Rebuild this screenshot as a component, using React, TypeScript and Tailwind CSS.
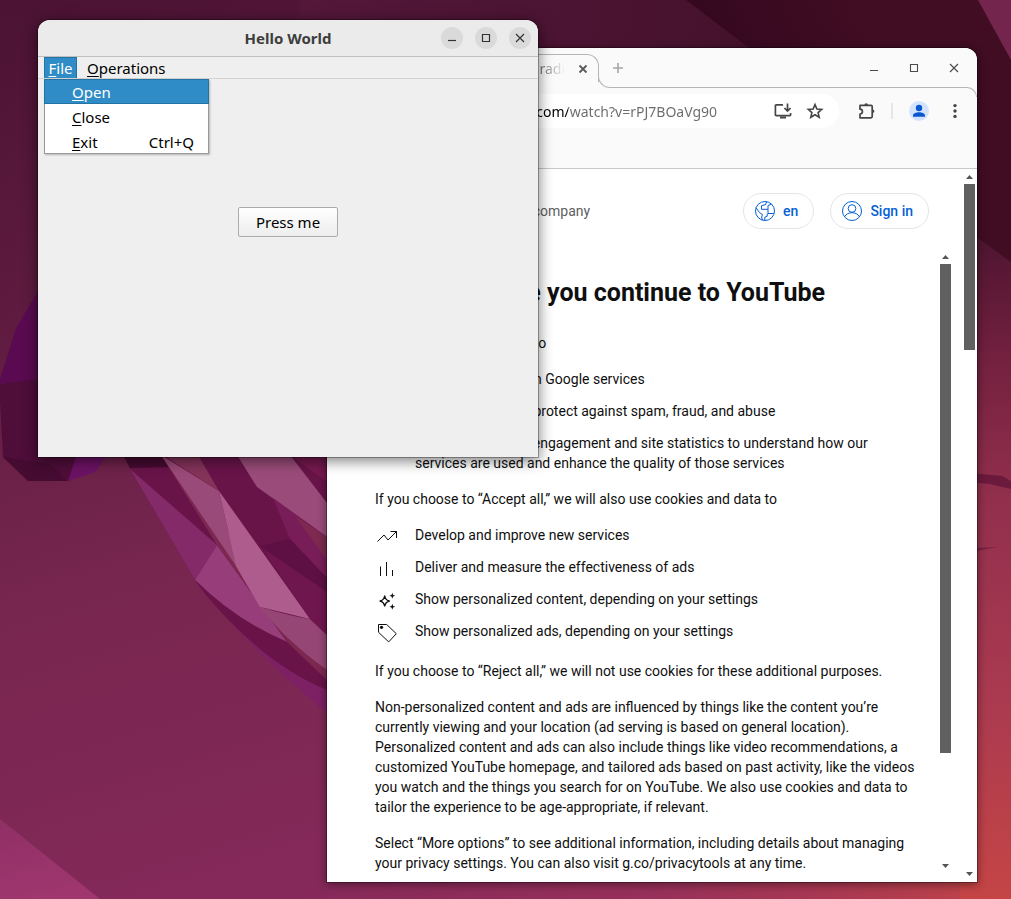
import { useState } from "react";
import type { ReactNode } from "react";

const UI = "font-['Noto_Sans','Open_Sans',sans-serif]";

function Wallpaper() {
  return (
    <svg aria-hidden="true" className="absolute inset-0 h-full w-full" viewBox="0 0 1011 899" preserveAspectRatio="none">
      <defs>
        <linearGradient id="base" gradientUnits="userSpaceOnUse" x1="60" y1="0" x2="330" y2="899">
          <stop offset="0" stopColor="#4c1334" />
          <stop offset="0.3" stopColor="#5e1b3f" />
          <stop offset="0.6" stopColor="#76264f" />
          <stop offset="1" stopColor="#86295a" />
        </linearGradient>
        <linearGradient id="top" gradientUnits="userSpaceOnUse" x1="300" y1="0" x2="740" y2="0">
          <stop offset="0" stopColor="#54173a" />
          <stop offset="1" stopColor="#45122d" />
        </linearGradient>
        <linearGradient id="east" gradientUnits="userSpaceOnUse" x1="960" y1="230" x2="1000" y2="899">
          <stop offset="0" stopColor="#4b1430" />
          <stop offset="0.2" stopColor="#74213f" />
          <stop offset="0.4" stopColor="#912f4d" />
          <stop offset="0.7" stopColor="#aa3a50" />
          <stop offset="1" stopColor="#c54545" />
        </linearGradient>
        <linearGradient id="south" gradientUnits="userSpaceOnUse" x1="300" y1="0" x2="1011" y2="0">
          <stop offset="0" stopColor="#86295a" />
          <stop offset="0.5" stopColor="#97305a" />
          <stop offset="0.8" stopColor="#ad3a50" />
          <stop offset="1" stopColor="#c44546" />
        </linearGradient>
        <linearGradient id="dark" gradientUnits="userSpaceOnUse" x1="720" y1="60" x2="850" y2="0">
          <stop offset="0" stopColor="#350820" />
          <stop offset="1" stopColor="#400d22" />
        </linearGradient>
        <linearGradient id="corner" x1="0" y1="0" x2="0.3" y2="1">
          <stop offset="0" stopColor="#8f3065" />
          <stop offset="1" stopColor="#9f366e" />
        </linearGradient>
      </defs>
      <rect width="1011" height="899" fill="url(#base)" />
      <rect x="300" width="711" height="60" fill="url(#top)" />
      <rect x="327" y="860" width="684" height="39" fill="url(#south)" />
      <path d="M686 0H1011V270L960 225V60H765Z" fill="url(#dark)" />
      <path d="M978 0H1011V60Z" fill="#74254e" />
      <path d="M960 225L1011 262V899H960Z" fill="url(#east)" />
      <path d="M960 472L1002 476L1011 481V489L990 484L960 481Z" fill="#6b1a3d" />
      <path d="M960 549L997 547L970 552H960Z" fill="#74203f" />
      <path d="M38 291L16 328L0 379V384L50 378V291Z" fill="#5a0a50" />
      <path d="M0 384L60 376L120 457L105 457L68 481H28L3 457L0 400Z" fill="#4f0d3a" />
      <path d="M3 457L28 481H68L50 464Z" fill="#450b31" />
      <path d="M76 457H106L95 472L68 481Z" fill="#6b1264" />
      <path d="M123 455H327V675L285 641Q220 590 195 580L130 469Z" fill="#681449" />
      <path d="M123 455H163L172 467L130 468Z" fill="#450b31" />
      <path d="M130 469L217 545L195 580Z" fill="#842a69" />
      <path d="M217 545L287 642Q235 620 195 580Z" fill="#973d7a" />
      <path d="M195 580Q235 620 287 642L327 690V713Q250 650 195 580Z" fill="#7d2164" />
      <path d="M195 580Q235 620 287 642L327 680V690Q265 665 205 594Z" fill="#681449" />
      <path d="M161 455L217 545L287 642L327 680V660L262 607L210 495Z" fill="#7c2851" />
      <path d="M161 455L219 491L228 530L260 607L236 566Z" fill="#9a4a78" />
      <path d="M219 491L310 619L260 607L236 566L228 530Z" fill="#ad5c8d" />
      <path d="M260 607Q290 616 310 619L327 635V670Q285 640 260 607Z" fill="#964674" />
      <path d="M163 455H198L219 491Z" fill="#843359" />
      <path d="M237 455H290L327 503V537L257 487Z" fill="#9a4b79" />
      <path d="M290 455H327V482Z" fill="#77194f" />
      <path d="M273 498L327 537V578L290 539Z" fill="#781d58" />
      <path d="M295 516L327 537V560Z" fill="#7d2950" />
      <path d="M260 546L290 539L327 578V592Z" fill="#5e1044" />
      <path d="M263 549L327 592V635L310 619Z" fill="#70164f" />
      <path d="M0 819L100 899H0Z" fill="url(#corner)" />
    </svg>
  );
}

function RoundButton({ label, children }: { label: string; children: ReactNode }) {
  return (
    <button aria-label={label} className="flex size-[22px] items-center justify-center rounded-full bg-[#dadada] text-[#333]">
      <svg aria-hidden="true" className="size-4" viewBox="0 0 16 16" fill="none" stroke="currentColor" strokeWidth="1.2">
        {children}
      </svg>
    </button>
  );
}

function FlatButton({ label, children }: { label: string; children: ReactNode }) {
  return (
    <button aria-label={label} className="flex size-6 items-center justify-center text-[#4a4a4a]">
      <svg aria-hidden="true" className="size-4" viewBox="0 0 16 16" fill="none" stroke="currentColor" strokeWidth="1.1">
        {children}
      </svg>
    </button>
  );
}

function Mnemonic({ text }: { text: string }) {
  return (
    <span>
      <span className="underline decoration-1 underline-offset-2">{text[0]}</span>
      {text.slice(1)}
    </span>
  );
}

const fileMenu = [
  { label: "Open", shortcut: "" },
  { label: "Close", shortcut: "" },
  { label: "Exit", shortcut: "Ctrl+Q" },
];

function HelloWindow() {
  const [active, setActive] = useState(0);
  return (
    <section
      aria-label="Hello World"
      className={`absolute top-5 left-[38px] flex h-[437px] w-[500px] flex-col rounded-t-xl bg-[#efefef] text-[15px] text-black shadow-[0_0_0_1px_rgba(0,0,0,0.3),0_3px_14px_1px_rgba(0,0,0,0.5)] ${UI}`}
    >
      <header className="relative flex h-[37px] shrink-0 items-center justify-end gap-3 rounded-t-xl border-b border-[#bfbfbf] bg-[#ebebeb] px-[7px]">
        <h1 className="pointer-events-none absolute inset-0 flex items-center justify-center text-[15px] font-bold text-[#3d3d3d]">
          Hello World
        </h1>
        <RoundButton label="Minimize">
          <path d="M4 10.5h8" />
        </RoundButton>
        <RoundButton label="Maximize">
          <path d="M4.5 4.5h7v7h-7z" />
        </RoundButton>
        <RoundButton label="Close">
          <path d="M4 4l8 8M12 4l-8 8" />
        </RoundButton>
      </header>
      <nav className="relative flex h-[22px] shrink-0 items-stretch gap-1.5 border-b border-[#d3d3d3] px-1.5 leading-5">
        <button aria-expanded="true" className="w-[33px] border border-b-0 border-[#2373a5] bg-[#308cc6] text-white">
          <Mnemonic text="File" />
        </button>
        <button className="px-1">
          <Mnemonic text="Operations" />
        </button>
        <ul
          role="menu"
          className="absolute top-[22px] left-1.5 w-[165px] bg-white shadow-[1px_1px_2px_rgba(0,0,0,0.25)] outline outline-[#999] -outline-offset-1"
        >
          {fileMenu.map((item, i) => (
            <li key={item.label} role="none">
              <button
                role="menuitem"
                onMouseEnter={() => setActive(i)}
                className={`relative flex h-[25px] w-full items-center justify-between pr-[15px] pl-7 ${
                  i === active ? "bg-[#308cc6] text-white outline outline-[#2373a5] -outline-offset-1" : "text-black"
                }`}
              >
                <Mnemonic text={item.label} />
                <span>{item.shortcut}</span>
              </button>
            </li>
          ))}
        </ul>
      </nav>
      <main className="flex flex-1 items-start justify-center pt-32">
        <button className="h-[30px] w-[100px] rounded-xs border border-[#ababab] bg-linear-to-b from-white to-[#ededed]">Press me</button>
      </main>
    </section>
  );
}

function Scrollbar({ thumb, className }: { thumb: string; className: string }) {
  return (
    <div aria-hidden="true" className={`flex flex-col items-center justify-between ${className}`}>
      <div className="flex w-full flex-col items-center gap-[5px]">
        <svg className="h-1 w-[7px]" viewBox="0 0 7 4" fill="#555">
          <path d="M0 4L3.5 0L7 4Z" />
        </svg>
        <div className={`w-[11px] bg-[#606060] ${thumb}`} />
      </div>
      <svg className="h-1 w-[7px]" viewBox="0 0 7 4" fill="#555">
        <path d="M0 0L3.5 4L7 0Z" />
      </svg>
    </div>
  );
}

function ConsentItem({ icon, children }: { icon: ReactNode; children: ReactNode }) {
  return (
    <li className="flex gap-4">
      <svg aria-hidden="true" className="size-6 shrink-0" viewBox="0 0 24 24" fill="none" stroke="#0f0f0f" strokeWidth="1">
        {icon}
      </svg>
      <span>{children}</span>
    </li>
  );
}

function BrowserWindow() {
  return (
    <section
      aria-label="Browser"
      className="absolute top-12 left-[327px] flex h-[834px] w-[650px] flex-col overflow-hidden rounded-t-xl bg-white shadow-[0_0_0_1px_rgba(0,0,0,0.3),0_2px_8px_1px_rgba(0,0,0,0.4)]"
    >
      <div className={`flex h-10 shrink-0 bg-[#fafafa] text-[14px] text-[#777] ${UI}`}>
        <div className="mt-1.5 ml-3 flex h-7 w-[260px] items-center justify-between rounded-tr-xl border-t border-r border-[#b5b5b5] pr-[7px]">
          <span className="w-[226px] overflow-hidden bg-linear-to-r from-[#777] from-90% to-transparent bg-clip-text text-right whitespace-nowrap text-transparent">
            Ambient radi
          </span>
          <button aria-label="Close tab">
            <svg aria-hidden="true" className="size-4" viewBox="0 0 16 16" fill="none" stroke="#5a5a5a" strokeWidth="1.8">
              <path d="M4.5 4.5l7 7M11.5 4.500l-7 7" />
            </svg>
          </button>
        </div>
        <div className="-ml-px size-3 self-end rounded-bl-xl border-b border-l border-[#b5b5b5]" />
        <div className="mr-2.5 flex flex-1 items-center justify-between border-b border-[#b5b5b5] pr-px">
          <button aria-label="New tab">
            <svg aria-hidden="true" className="size-4" viewBox="0 0 16 16" fill="none" stroke="#a6a6a6" strokeWidth="1.6">
              <path d="M8 3v10M3 8h10" />
            </svg>
          </button>
          <div className="flex gap-4">
            <FlatButton label="Minimize browser">
              <path d="M4 10.5h8" />
            </FlatButton>
            <FlatButton label="Maximize browser">
              <path d="M4.5 4.5h7v7h-7z" />
            </FlatButton>
            <FlatButton label="Close browser">
              <path d="M4 4l8 8M12 4l-8 8" />
            </FlatButton>
          </div>
        </div>
      </div>

      <div className="relative flex h-[81px] shrink-0 items-start border-b border-[#c8c8c8] bg-[#fafafa] pt-1.5 pr-3">
        <span className="absolute -top-px right-0 size-2.5 rounded-tr-xl border-t border-r border-[#b5b5b5]" />
        <div className="ml-[113px] flex h-[34px] flex-1 items-center gap-3 rounded-full bg-white pr-3.5 pl-[38px]">
          <input
            aria-label="Address"
            readOnly
            value="youtube.com/watch?v=rPJ7BOaVg90"
            className={`h-5 min-w-0 flex-1 bg-linear-to-r from-black from-[90px] to-[#6b6b6b] to-[90px] bg-clip-text text-[14px] text-transparent outline-none ${UI}`}
          />
          <button aria-label="Install app">
            <svg aria-hidden="true" className="size-5" viewBox="0 0 20 20" fill="none" stroke="#454545" strokeWidth="1.7">
              <path d="M10 3.8H3.2a.8.8 0 0 0-.8.8v9.2a.8.8 0 0 0 .8.8h13.6a.8.8 0 0 0 .8-.8V12" />
              <path d="M14.5 2.5v7M11.4 7l3.1 3.1L17.6 7" />
              <path d="M7 16.5h6" strokeWidth="2.2" />
            </svg>
          </button>
          <button aria-label="Bookmark this page">
            <svg aria-hidden="true" className="size-5" viewBox="0 0 20 20" fill="none" stroke="#454545" strokeWidth="1.6">
              <path d="M10 3.6l1.9 4.4 4.8.4-3.6 3.2 1.1 4.7L10 13.8l-4.2 2.5 1.1-4.7-3.6-3.2 4.8-.4z" />
            </svg>
          </button>
        </div>
        <div className="flex h-[34px] items-center pl-[18px]">
          <button aria-label="Extensions">
            <svg aria-hidden="true" className="size-5" viewBox="0 0 20 20" fill="none" stroke="#454545" strokeWidth="1.7">
              <path d="M3 4.4h11a1.2 1.2 0 0 1 1.2 1.2v10a1.2 1.2 0 0 1-1.2 1.2H3v-3.8a2.4 2.4 0 0 0 0-4.8z" strokeLinejoin="round" />
              <path d="M7.4 4a1.8 1.8 0 0 1 3.6 0zM15.6 8.4a1.8 1.8 0 0 1 0 3.6z" fill="#454545" stroke="none" />
            </svg>
          </button>
          <span className="mr-4 ml-3.5 h-4 w-0.5 bg-[#e6e6e6]" />
          <button aria-label="Profile" className="size-5 rounded-full bg-[#d3e3fd]">
            <svg aria-hidden="true" className="size-5" viewBox="0 0 20 20" fill="#0b57d0">
              <circle cx="10" cy="7" r="3.2" />
              <path d="M4 15.8v-1.3c0-2.2 3.5-3.3 6-3.3s6 1.1 6 3.3v1.3z" />
            </svg>
          </button>
          <button aria-label="Browser menu" className="ml-4">
            <svg aria-hidden="true" className="size-5" viewBox="0 0 20 20" fill="#454545">
              <circle cx="10" cy="4.6" r="1.7" />
              <circle cx="10" cy="10" r="1.7" />
              <circle cx="10" cy="15.4" r="1.7" />
            </svg>
          </button>
        </div>
      </div>

      <div className="flex min-h-0 flex-1 font-[Roboto,sans-serif] text-[14px] leading-5 text-[#0f0f0f]">
        <div className="flex min-w-0 flex-1 flex-col pl-12">
          <div className="flex items-center justify-between pt-6 pr-[35px]">
            <span className="ml-[99px] text-[#606060]">a Google company</span>
            <div className="flex gap-4 font-medium text-[#065fd4]">
              <button className="flex h-9 items-center gap-1.5 rounded-full border border-[#e5e5e5] pr-[15px] pl-[9px]">
                <svg aria-hidden="true" className="size-6" viewBox="0 0 24 24" fill="none" stroke="#065fd4" strokeWidth="1">
                  <circle cx="12" cy="12" r="9.5" />
                  <path d="M13.5 2.7l-.8 2.8-4.2 1.2v3.6H15v4.200h5.800M18.600 5.200L15 6.500v3.800M3 8.700l3.600 5 2.900 1.800-.8 2.500.6 3.200M11.800 21.400v-3.200l2.400-1v-2.700" />
                </svg>
                en
              </button>
              <button className="flex h-9 items-center gap-1.5 rounded-full border border-[#e5e5e5] pr-[15px] pl-[9px]">
                <svg aria-hidden="true" className="size-6" viewBox="0 0 24 24" fill="none" stroke="#065fd4" strokeWidth="1">
                  <circle cx="12" cy="12" r="9.5" />
                  <circle cx="12" cy="9.5" r="3.8" />
                  <path d="M4.600 17.800C6 15 9 13.700 12 13.700s6 1.300 7.400 4.100" />
                </svg>
                Sign in
              </button>
            </div>
          </div>

          <div className="mt-6 flex min-h-0 flex-1">
            <div className="min-w-0 flex-1 pt-6">
              <h2 className="mr-6 mb-[25px] text-center text-[25px] leading-[31px] font-bold">Before you continue to YouTube</h2>
              <p>We use cookies and data to</p>
              <ul className="my-4 mr-6 flex flex-col gap-2">
                <ConsentItem icon={<path d="M4 12a8 8 0 1 0 16 0a8 8 0 1 0-16 0M12 7v5l3 3" />}>Deliver and maintain Google services</ConsentItem>
                <ConsentItem icon={<path d="M12 3l7 3v6q0 6-7 9q-7-3-7-9V6z" />}>Track outages and protect against spam, fraud, and abuse</ConsentItem>
                <ConsentItem icon={<path d="M4 20V10h4v10M10 20V4h4v16M16 20v-7h4v7" />}>
                  Measure audience engagement and site statistics to understand how our services are used and enhance the quality of those services
                </ConsentItem>
              </ul>
              <p>If you choose to “Accept all,” we will also use cookies and data to</p>
              <ul className="my-4 flex flex-col gap-2">
                <ConsentItem icon={<path d="M2.5 16.5L9 10L13 15L21.500 6.500M15.500 6.500h6v6.500" />}>Develop and improve new services</ConsentItem>
                <ConsentItem icon={<path d="M5.500 19V9.500M11.500 19V5M17.500 19v-6" />}>Deliver and measure the effectiveness of ads</ConsentItem>
                <ConsentItem
                  icon={
                    <>
                      <path d="M9.700 6.500c.5 3.800 1.700 5 5 5.500c-3.300.5-4.500 1.700-5 5.500c-.5-3.800-1.700-5-5-5.500c3.300-.5 4.500-1.700 5-5.500z" strokeWidth="1.300" />
                      <path d="M17.300 3.700l.8 2.200 2.200.8-2.200.8-.8 2.200-.8-2.200-2.200-.8 2.200-.8zM17.300 14.700l.8 2.200 2.200.8-2.200.8-.8 2.200-.8-2.200-2.200-.8 2.200-.8z" fill="#0f0f0f" stroke="none" />
                    </>
                  }
                >
                  Show personalized content, depending on your settings
                </ConsentItem>
                <ConsentItem
                  icon={
                    <>
                      <path d="M3.500 3.500h8.200L21.300 12.700 13.700 20.900 3.500 11.300z" />
                      <circle cx="6.500" cy="6.300" r="1.600" fill="#0f0f0f" stroke="none" />
                    </>
                  }
                >
                  Show personalized ads, depending on your settings
                </ConsentItem>
              </ul>
              <p className="mb-4">If you choose to “Reject all,” we will not use cookies for these additional purposes.</p>
              <p className="mr-5 mb-4">
                Non-personalized content and ads are influenced by things like the content you’re currently viewing and your location (ad serving is
                based on general location). Personalized content and ads can also include things like video recommendations, a customized YouTube
                homepage, and tailored ads based on past activity, like the videos you watch and the things you search for on YouTube. We also use
                cookies and data to tailor the experience to be age-appropriate, if relevant.
              </p>
              <p className="mr-5">
                Select “More options” to see additional information, including details about managing your privacy settings. You can also visit
                g.co/privacytools at any time.
              </p>
            </div>
            <Scrollbar className="mr-[13px] w-[11px] pt-0.5 pb-3.5" thumb="h-[489px]" />
          </div>
        </div>
        <Scrollbar className="mr-0.5 w-[11px] pt-1.5 pb-1.5" thumb="h-[166px]" />
      </div>
    </section>
  );
}

export default function App() {
  return (
    <div className="relative min-h-screen w-full overflow-hidden bg-[#76264f]">
      <Wallpaper />
      <BrowserWindow />
      <HelloWindow />
    </div>
  );
}
